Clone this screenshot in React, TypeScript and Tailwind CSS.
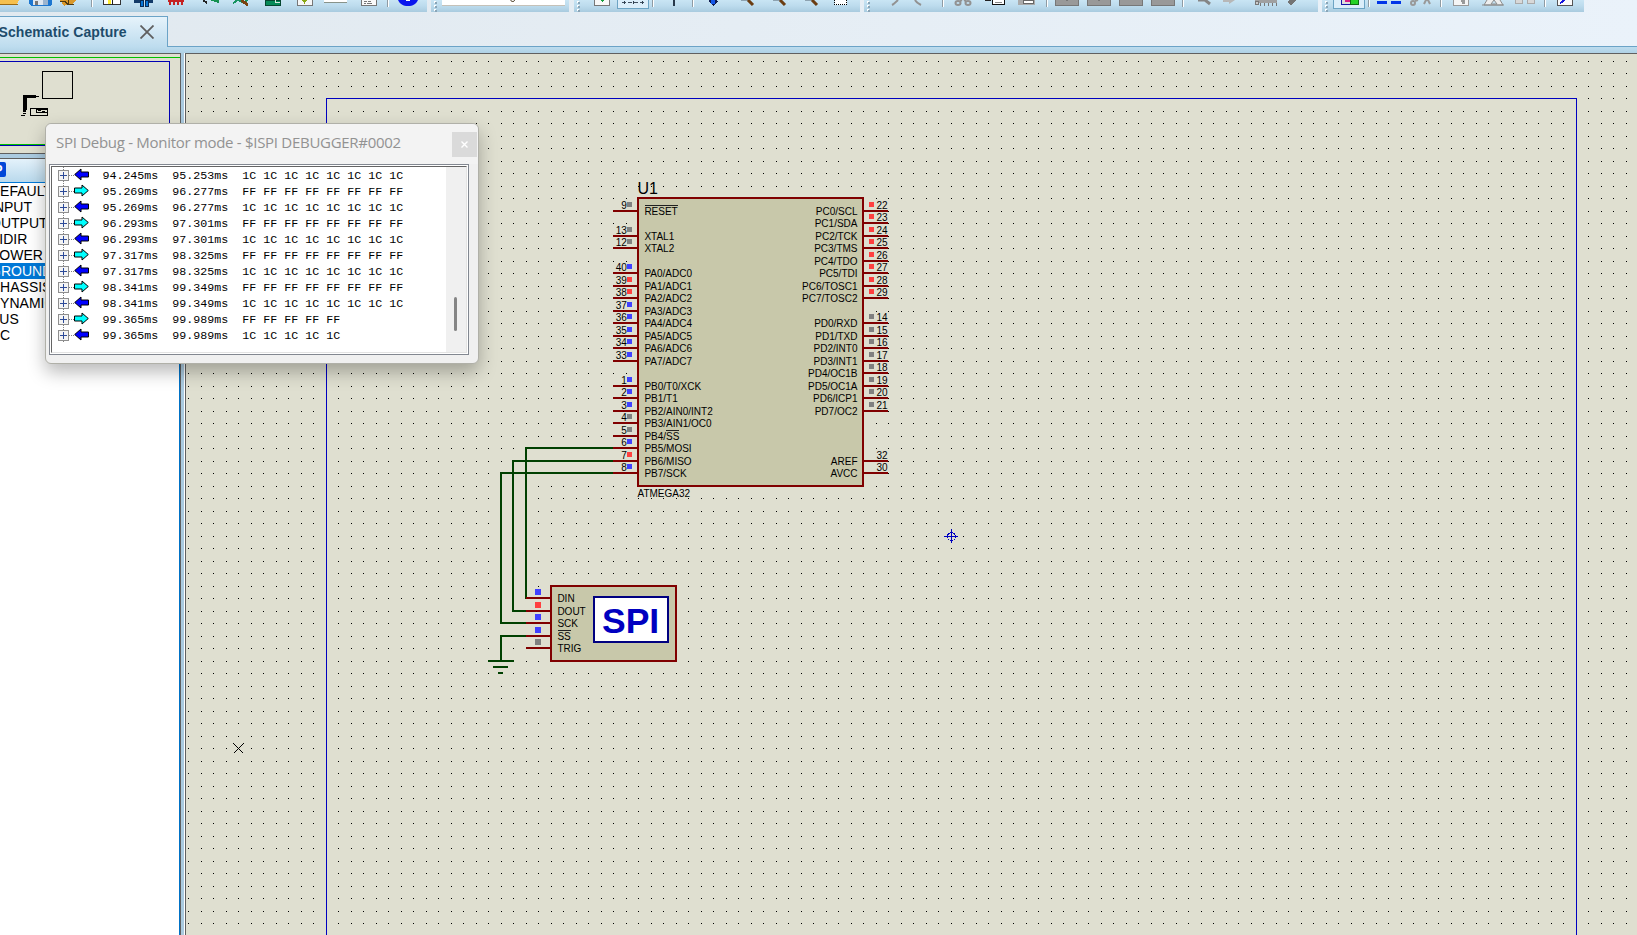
import React from "react";

type Level = "low" | "high" | "none" | "off";

interface Pin {
  num: string;
  label: string;
  row: number;
  level: Level;
}

const LEVEL_COLOR: Record<Level, string> = {
  low: "#4040ff",
  high: "#ff4040",
  none: "#808080",
  off: "transparent",
};

const gridY = (row: number) => Math.floor(211 + row * 12.5);

const leftPins: Pin[] = [
  { num: "9", label: "RESET", row: 0, level: "none" },
  { num: "13", label: "XTAL1", row: 2, level: "none" },
  { num: "12", label: "XTAL2", row: 3, level: "none" },
  { num: "40", label: "PA0/ADC0", row: 5, level: "low" },
  { num: "39", label: "PA1/ADC1", row: 6, level: "high" },
  { num: "38", label: "PA2/ADC2", row: 7, level: "high" },
  { num: "37", label: "PA3/ADC3", row: 8, level: "low" },
  { num: "36", label: "PA4/ADC4", row: 9, level: "low" },
  { num: "35", label: "PA5/ADC5", row: 10, level: "low" },
  { num: "34", label: "PA6/ADC6", row: 11, level: "low" },
  { num: "33", label: "PA7/ADC7", row: 12, level: "low" },
  { num: "1", label: "PB0/T0/XCK", row: 14, level: "low" },
  { num: "2", label: "PB1/T1", row: 15, level: "low" },
  { num: "3", label: "PB2/AIN0/INT2", row: 16, level: "low" },
  { num: "4", label: "PB3/AIN1/OC0", row: 17, level: "none" },
  { num: "5", label: "PB4/SS", row: 18, level: "none" },
  { num: "6", label: "PB5/MOSI", row: 19, level: "low" },
  { num: "7", label: "PB6/MISO", row: 20, level: "high" },
  { num: "8", label: "PB7/SCK", row: 21, level: "low" },
];

const rightPins: Pin[] = [
  { num: "22", label: "PC0/SCL", row: 0, level: "high" },
  { num: "23", label: "PC1/SDA", row: 1, level: "high" },
  { num: "24", label: "PC2/TCK", row: 2, level: "high" },
  { num: "25", label: "PC3/TMS", row: 3, level: "high" },
  { num: "26", label: "PC4/TDO", row: 4, level: "high" },
  { num: "27", label: "PC5/TDI", row: 5, level: "high" },
  { num: "28", label: "PC6/TOSC1", row: 6, level: "high" },
  { num: "29", label: "PC7/TOSC2", row: 7, level: "high" },
  { num: "14", label: "PD0/RXD", row: 9, level: "none" },
  { num: "15", label: "PD1/TXD", row: 10, level: "none" },
  { num: "16", label: "PD2/INT0", row: 11, level: "none" },
  { num: "17", label: "PD3/INT1", row: 12, level: "none" },
  { num: "18", label: "PD4/OC1B", row: 13, level: "none" },
  { num: "19", label: "PD5/OC1A", row: 14, level: "none" },
  { num: "20", label: "PD6/ICP1", row: 15, level: "none" },
  { num: "21", label: "PD7/OC2", row: 16, level: "none" },
  { num: "32", label: "AREF", row: 20, level: "off" },
  { num: "30", label: "AVCC", row: 21, level: "off" },
];

const spiPins: { label: string; y: number; level: Level }[] = [
  { label: "DIN", y: 598, level: "low" },
  { label: "DOUT", y: 611, level: "high" },
  { label: "SCK", y: 623, level: "low" },
  { label: "SS", y: 636, level: "low" },
  { label: "TRIG", y: 648, level: "none" },
];

const parts = ["DEFAULT", "INPUT", "OUTPUT", "BIDIR", "POWER", "GROUND", "CHASSIS", "DYNAMIC", "BUS", "NC"];

const transfers: { start: string; end: string; out: boolean; count: number }[] = [
  { start: "94.245ms", end: "95.253ms", out: false, count: 8 },
  { start: "95.269ms", end: "96.277ms", out: true, count: 8 },
  { start: "95.269ms", end: "96.277ms", out: false, count: 8 },
  { start: "96.293ms", end: "97.301ms", out: true, count: 8 },
  { start: "96.293ms", end: "97.301ms", out: false, count: 8 },
  { start: "97.317ms", end: "98.325ms", out: true, count: 8 },
  { start: "97.317ms", end: "98.325ms", out: false, count: 8 },
  { start: "98.341ms", end: "99.349ms", out: true, count: 8 },
  { start: "98.341ms", end: "99.349ms", out: false, count: 8 },
  { start: "99.365ms", end: "99.989ms", out: true, count: 5 },
  { start: "99.365ms", end: "99.989ms", out: false, count: 5 },
];

function Sep({ x }: { x: number }) {
  return (
    <g>
      <rect x={x} y="0" width="1" height="7" fill="#8f9ba3" />
      <rect x={x + 1} y="0" width="1" height="7" fill="#fff" />
    </g>
  );
}

function Grip({ x }: { x: number }) {
  return (
    <g>
      {[1, 5, 9].map((y) => (
        <g key={y}>
          <rect x={x} y={y} width="2" height="2" fill="#fff" />
          <rect x={x + 1} y={y + 1} width="2" height="2" fill="#8aa5b7" />
        </g>
      ))}
    </g>
  );
}

const BAR = "h-3 shrink-0 bg-linear-to-b from-[#c9e5f4] via-[#bcdbed] to-[#a9cbdf]";

function Toolbars() {
  return (
    <div className="flex h-3 shrink-0 gap-1">
      <div className={`${BAR} w-[427px]`}>
        <svg width="427" height="12" viewBox="0 0 427 12" shapeRendering="crispEdges">
          <path d="M0 0h19l-2 4H0z" fill="#f6c04d" />
          <path d="M0 4h18" stroke="#9a6a14" />
          <path d="M29 0h23v4l-2 2H31l-2-2z" fill="#1c76d0" />
          <path d="M33 0h14v5H33z" fill="#dfe7f0" />
          <path d="M35 1h3v4h-3z" fill="#777" />
          <path d="M43 0h5v5h-5z" fill="#9bb4cf" />
          <path d="M60 0h16l-3 4h-5l-4 2z" fill="#d9982a" />
          <path d="M60 1h5l3 4M68 0v4h6" stroke="#4d3a12" fill="none" />
          <Sep x={91} />
          <path d="M103.500 0v4.500h17V0" fill="#fff" stroke="#333" />
          <path d="M108 0h3v4h-3z" fill="#ffee30" />
          <path d="M112.500 0v5" stroke="#222" />
          <path d="M134 0h8v3h-8zM146 0h7v3h-7z" fill="#123a68" />
          <path d="M140 0h3v6h-3zM145 0h3v6h-3z" fill="#0877d8" stroke="#082b55" />
          <path d="M168 0h16v2h-16zM169 1h2v4h-2zM173 1h2v4h-2zM177 1h2v4h-2zM181 1h2v4h-2z" fill="#c52222" />
          <path d="M203 0l4 3" stroke="#222" strokeWidth="2" />
          <path d="M210 0h9v3l-7-2z" fill="#159150" />
          <path d="M233 3l5-3 6 3 3-3" stroke="#169360" fill="none" strokeWidth="2" />
          <path d="M241 0l7 5" stroke="#7a4310" strokeWidth="3" />
          <path d="M265 0h15v5h-15z" fill="#078a58" stroke="#064730" />
          <path d="M280 2h-5v-2" stroke="#d9eadf" fill="none" />
          <path d="M297.500 0v5h15V0" fill="#f6f6f6" stroke="#777" />
          <path d="M302 0h5l-2.500 4z" fill="#8aa814" />
          <path d="M324 0h23v2h-23z" fill="#fff" />
          <path d="M324 2h23" stroke="#88938a" />
          <path d="M361.500 0v5.500h15V0" fill="#fafafa" stroke="#777" />
          <path d="M364 1h3m1 0h3M364 3h2m1 0h5" stroke="#777" />
          <Sep x={387} />
          <path d="M398 0h20c-2 4-5 6-10 6s-8-2-10-6z" fill="#0b16ee" shapeRendering="auto" />
          <path d="M406 0h4v1h-4z" fill="#fff" />
        </svg>
      </div>
      <div className={`${BAR} w-[138px]`}>
        <svg width="138" height="12" viewBox="431 0 138 12" shapeRendering="crispEdges">
          <Grip x={434} />
          <rect x="442" y="0" width="123" height="5" fill="#fff" />
          <path d="M442 5.500h123" stroke="#c5c1b8" />
          <path d="M510.500 0c1 2 4 2 4 0" stroke="#3a2a10" fill="none" shapeRendering="auto" />
        </svg>
      </div>
      <div className={`${BAR} ml-[1px] w-[286px]`}>
        <svg width="286" height="12" viewBox="574 0 286 12" shapeRendering="crispEdges">
          <Grip x={577} />
          <path d="M594.500 0v5h15V0" fill="#f8f8f8" stroke="#777" />
          <path d="M600 0h4l-2 2z" fill="#159d3c" />
          <rect x="617.5" y="-2" width="31" height="10" fill="#dceefa" stroke="#6da4c4" />
          <path d="M622 2.500h23" stroke="#405060" strokeDasharray="4 2" />
          <path d="M624 1v3M633 1v3M642 1v3" stroke="#304050" />
          <Sep x={652} />
          <path d="M674 0v6" stroke="#27384a" strokeWidth="2" />
          <Sep x={692} />
          <path d="M708 1l5 5 5-5-2-1h-6z" fill="#101c50" />
          <path d="M711 0h4v4h-4z" fill="#1557e8" />
          <g shapeRendering="auto">
            <path d="M741 0h7M773 0h7M805 0h7" stroke="#52616e" />
            <path d="M748 0l5 5M780 0l5 5M812 0l5 5" stroke="#6b3d12" strokeWidth="3" />
          </g>
          <path d="M834.500 0v4.500h12v-4.500" fill="#fff" stroke="#000" strokeDasharray="1 1" />
        </svg>
      </div>
      <div className={`${BAR} w-[454px]`}>
        <svg width="454" height="12" viewBox="864 0 454 12" shapeRendering="crispEdges">
          <Grip x={867} />
          <g shapeRendering="auto" stroke="#929292" strokeWidth="2" fill="none">
            <path d="M892 5c2-1 4-3 6-5M921 5c-2-1-5-3-6-5" />
            <ellipse cx="958" cy="3" rx="2.500" ry="2" />
            <ellipse cx="968" cy="3" rx="2.500" ry="2" />
            <path d="M960 1l2-1M966 1l-2-1" />
          </g>
          <Sep x={942} />
          <path d="M985 0h6" stroke="#222" strokeWidth="2" />
          <path d="M992.500 0v4.500h12V0" fill="#fff" stroke="#111" />
          <path d="M995 2.500h7" stroke="#888" />
          <path d="M1018 0h17v5h-17z" fill="#aaa" />
          <path d="M1023 0h10v3h-10z" fill="#fff" stroke="#666" />
          <Sep x={1046} />
          {[1055, 1087, 1119, 1151].map((x) => (
            <g key={x}>
              <rect x={x} y="0" width="24" height="6" fill="#777" />
              <rect x={x + 1} y="0" width="22" height="5" fill="#999" />
            </g>
          ))}
          <path d="M1066 0h2v1h-2zM1098 0h2v1h-2z" fill="#777" />
          <Sep x={1182} />
          <g shapeRendering="auto">
            <path d="M1198 0h7l5 4" stroke="#858585" strokeWidth="3" fill="none" />
            <path d="M1223 0h12l-6 4v-2h-6z" fill="#b7b7b7" />
          </g>
          <path d="M1255 0h22v3h-22z" fill="#a0a0a0" />
          <path d="M1260 3v3M1264 3v3M1268 3v3M1272 3v3M1276 3v3" stroke="#777" />
          <circle cx="1257" cy="3" r="2" fill="#ccc" stroke="#777" />
          <path d="M1287 2l4 3 5-5h-6z" fill="#747474" />
        </svg>
      </div>
      <div className={`${BAR} w-[262px]`}>
        <svg width="262" height="12" viewBox="1322 0 262 12" shapeRendering="crispEdges">
          <Grip x={1325} />
          <rect x="1333.5" y="-2" width="31" height="10" fill="#dceefa" stroke="#6da4c4" />
          <path d="M1341.500 0v4.500h9V0" fill="#ddd" stroke="#1717a8" />
          <path d="M1345 0h5v2h-5z" fill="#d4208a" />
          <path d="M1350.500 0v4.500h8V0" fill="#25d225" stroke="#116b11" />
          <Sep x={1368} />
          <path d="M1377 2.500h10M1391 2.500h10" stroke="#0035e8" strokeWidth="3" />
          <g shapeRendering="auto" stroke="#999" strokeWidth="2" fill="none">
            <circle cx="1413" cy="3" r="2" />
            <path d="M1415 1l3-1M1424 4l2-4h2l2 4" />
          </g>
          <Sep x={1440} />
          <path d="M1453.500 0v5h15V0" fill="#f5f5f5" stroke="#999" />
          <path d="M1461 0h4v4h-3z" fill="#999" />
          <g shapeRendering="auto">
            <path d="M1487 0l-3 5h19l-3-5M1482 5l22 0M1491 4l3-4 3 4z" fill="#eee" stroke="#8c8c8c" />
          </g>
          <path d="M1515.500 0v3.500h7V0M1527.500 0v3.500h7V0" fill="#d8d8d8" stroke="#aaa" />
          <Sep x={1544} />
          <path d="M1557.500 0v5h15V0" fill="#fafafa" stroke="#555" />
          <path d="M1560 3l5-3" stroke="#1616dd" strokeWidth="2" />
        </svg>
      </div>
    </div>
  );
}

function TabStrip() {
  return (
    <div className="flex h-[35px] shrink-0 items-end">
      <div className="flex h-[31px] w-[168px] items-center gap-[12px] border-t border-r border-[#6ba3c7] bg-linear-to-b from-[#e6f3fb] to-[#bddcee]">
        <span className="-ml-[1.500px] w-[129px] -translate-y-[0.500px] whitespace-nowrap text-[14px] leading-none font-bold tracking-[0.080px] text-[#1d4c6b]">
          Schematic Capture
        </span>
        <svg width="14" height="14" viewBox="0 0 14 14">
          <path d="M.5 .5l13 13M13.500 .5l-13 13" stroke="#5f5f5f" strokeWidth="1.800" />
        </svg>
      </div>
      <div className="h-full flex-1 border-b border-[#6ba3c7]" />
    </div>
  );
}

function Sidebar() {
  return (
    <div className="flex w-[181px] shrink-0 flex-col">
      <div className="h-[101px] shrink-0 border-t border-r border-b border-[#606060] bg-[#dfdfd0]">
        <svg width="180" height="99" viewBox="0 54 180 99" shapeRendering="crispEdges">
          <path d="M0 57.500h180M0 144.500h180" stroke="#00c000" />
          <path d="M0 61.500h169.500v84H0" fill="none" stroke="#0000b4" />
          <rect x="42.5" y="71.5" width="30" height="27" fill="none" stroke="#000" />
          <path d="M24 112V96.500h12" fill="none" stroke="#000" strokeWidth="3" />
          <path d="M26.500 110V97M36 96.500h3" fill="none" stroke="#000" />
          <path d="M21 115.500h4M23 113.500h3" stroke="#000" />
          <rect x="30.5" y="108.500" width="17" height="7" fill="none" stroke="#000" />
          <path d="M36 109.500h11v3H36z" fill="none" stroke="#000" strokeWidth="1" />
          <path d="M38 110.500h3M42 111.500h3" fill="none" stroke="#000" />
        </svg>
      </div>
      <div className="h-1 shrink-0 bg-[#abcbe0]" />
      <div className="flex min-h-0 flex-1 flex-col overflow-hidden border-t border-r border-[#606060] bg-white">
        <div className="flex h-6 shrink-0 items-center border-b border-[#0078d7] bg-linear-to-b from-[#e4f2fb] to-[#b9d9ec]">
          <div className="-ml-[9px] flex h-[15px] w-[15px] -translate-y-[1px] items-center justify-center rounded-[2px] bg-[#0047d8] text-[12px] leading-none font-bold text-white">
            P
          </div>
        </div>
        <div className="flex min-h-0 flex-1 flex-col border-r border-[#0072c6]">
          {parts.map((p) => (
            <div
              key={p}
              className={
                p === "GROUND"
                  ? "h-4 bg-[#0078d7] text-[14px] leading-[16px] text-white"
                  : "h-4 text-[14px] leading-[16px] text-black"
              }
            >
              <span className="-ml-[10px]">{p}</span>
            </div>
          ))}
        </div>
      </div>
    </div>
  );
}

function Schematic() {
  return (
    <svg
      className="block"
      width="1451"
      height="881"
      viewBox="186 54 1451 881"
      fontFamily="'Liberation Sans', Arial, sans-serif"
      fontSize="10"
      shapeRendering="crispEdges"
    >
      <defs>
        <pattern id="grid" x="1" y="11" width="25" height="25" patternUnits="userSpaceOnUse">
          <path d="M0 0h1v1h-1zM12 0h1v1h-1zM0 12h1v1h-1zM12 12h1v1h-1z" fill="#000" />
        </pattern>
      </defs>
      <rect x="186" y="54" width="1451" height="881" fill="#dfdfd0" />
      <rect x="187" y="60" width="1450" height="875" fill="url(#grid)" />
      <path d="M326.500 935V98.500H1576.500V935" fill="none" stroke="#0000c0" />

      <g stroke="#004000" strokeWidth="2" fill="none">
        <path d="M613 448H526V599" />
        <path d="M613 461H513V611H527" />
        <path d="M613 473H501V623H527" />
        <path d="M527 636H501V661" />
        <path d="M488 661h26M493 667h15M498 673h5" />
      </g>

      <rect x="638" y="198" width="225" height="288" fill="#c8c8aa" stroke="#800000" strokeWidth="2" />
      <text x="637.500" y="194" fontSize="16">U1</text>
      <text x="637.500" y="497">ATMEGA32</text>

      {leftPins.map((p) => {
        const y = gridY(p.row);
        return (
          <g key={p.num}>
            <path d={`M613 ${y}H637`} stroke="#800000" strokeWidth="2" />
            <rect x="627" y={y - 9} width="5" height="5" fill={LEVEL_COLOR[p.level]} />
            <text x="626.800" y={y - 2} textAnchor="end">{p.num}</text>
            <text x="644.400" y={y + 4}>{p.label}</text>
          </g>
        );
      })}
      {rightPins.map((p) => {
        const y = gridY(p.row);
        return (
          <g key={p.num}>
            <path d={`M864 ${y}H888`} stroke="#800000" strokeWidth="2" />
            <rect x="869" y={y - 9} width="5" height="5" fill={LEVEL_COLOR[p.level]} />
            <text x="876.500" y={y - 2}>{p.num}</text>
            <text x="857.500" y={y + 4} textAnchor="end">{p.label}</text>
          </g>
        );
      })}

      <rect x="551" y="586" width="125" height="75" fill="#c8c8aa" stroke="#800000" strokeWidth="2" />
      <rect x="594" y="597" width="74" height="45" fill="#fff" stroke="#000080" strokeWidth="2" />
      <text x="602" y="632.500" fontSize="35.500" fontWeight="700" fill="#0000c0">SPI</text>
      {spiPins.map((p) => (
        <g key={p.label}>
          <path d={`M526 ${p.y}H550`} stroke="#800000" strokeWidth="2" />
          <rect x="535" y={p.y - 9} width="6" height="6" fill={LEVEL_COLOR[p.level]} />
          <text x="557.400" y={p.y + 4}>{p.label}</text>
        </g>
      ))}
      <path d="M645 205.500h33M666 430.500h13M558 630.500h13" stroke="#202020" />

      <g stroke="#0000c0" fill="none">
        <path d="M944 536.500h14M951.500 529v14" />
        <circle cx="951.500" cy="536.500" r="4" />
      </g>
      <path d="M233.500 743.500l10 10M243.500 743.500l-10 10" stroke="#000" />
    </svg>
  );
}

function TreeMark({ out }: { out: boolean }) {
  return (
    <svg className="shrink-0" width="40" height="16" viewBox="0 0 40 16">
      <g shapeRendering="crispEdges">
        <path d="M11.500 0v16" stroke="#808080" strokeDasharray="1 1" />
        <path d="M17 8.500h6" stroke="#808080" strokeDasharray="1 1" />
        <rect x="6.5" y="3.500" width="10" height="10" fill="#f4f4f4" stroke="#8f8f8f" />
        <path d="M8 8.500h7M11.500 5v7" stroke="#2c4a98" />
      </g>
      {out ? (
        <path d="M22.500 5h7.500v-3l6.300 5.500-6.300 5.500v-3h-7.500z" fill="#00ffff" stroke="#000" />
      ) : (
        <path d="M36.500 5h-7.500v-3l-6.300 5.500 6.300 5.500v-3h7.500z" fill="#0000ff" stroke="#000" />
      )}
    </svg>
  );
}

function DebugWindow() {
  return (
    <div className="absolute top-[123px] left-[45px] flex h-[241px] w-[434px] flex-col rounded-[6px] border border-[#b0b0a8] bg-[#f0f0f0] shadow-[0_8px_18px_rgba(0,0,0,0.28)]">
      <div className="flex h-10 shrink-0 items-center justify-between rounded-t-[6px] bg-[#f3f3f3] pr-[1px] pl-[10px]">
        <span className="-mt-[4px] whitespace-nowrap font-['Open_Sans','Noto_Sans',sans-serif] text-[15px] tracking-[-0.290px] text-[#929292]">
          SPI Debug - Monitor mode - $ISPI DEBUGGER#0002
        </span>
        <div className="flex h-[25px] w-[25px] items-center justify-center bg-[#dadada]">
          <svg width="7" height="7" viewBox="0 0 7 7">
            <path d="M.5 .5l6 6M6.500 .5l-6 6" stroke="#fff" strokeWidth="1.400" />
          </svg>
        </div>
      </div>
      <div className="mr-[9px] ml-[3px] h-[191px] border border-[#828790] bg-white p-[1px]">
        <div className="flex h-full border-t border-r border-b border-l border-t-[#646464] border-r-[#e3e3e3] border-b-[#e3e3e3] border-l-[#646464]">
          <div className="min-w-0 flex-1">
            {transfers.map((t, i) => (
              <div key={i} className="flex h-4 items-center">
                <TreeMark out={t.out} />
                <span className="ml-[10.400px] pt-[1px] font-['Liberation_Mono',monospace] text-[11.667px] leading-[16px] whitespace-pre text-black">
                  {`${t.start}  ${t.end}  ${Array(t.count).fill(t.out ? "FF" : "1C").join(" ")}`}
                </span>
              </div>
            ))}
          </div>
          <div className="flex w-[20px] items-start justify-center bg-[#f0f0f0] pt-[130px] pr-[1px]">
            <div className="h-[34px] w-[3px] rounded-full bg-[#858585]" />
          </div>
        </div>
      </div>
    </div>
  );
}

export default function App() {
  return (
    <div className="relative flex h-[935px] w-[1637px] flex-col overflow-hidden bg-linear-to-r from-[#e1e9ef] to-[#eaf2fa] font-['Liberation_Sans',Arial,sans-serif]">
      <Toolbars />
      <TabStrip />
      <div className="h-[6px] shrink-0 bg-linear-to-b from-[#bddcee] to-[#b0d2e6]" />
      <div className="flex min-h-0 flex-1 bg-[#abcbe0]">
        <Sidebar />
        <div className="w-[3px] shrink-0" />
        <div className="w-px shrink-0 bg-white" />
        <div className="min-w-0 flex-1 border-t border-l border-[#606060]">
          <Schematic />
        </div>
      </div>
      <DebugWindow />
    </div>
  );
}
